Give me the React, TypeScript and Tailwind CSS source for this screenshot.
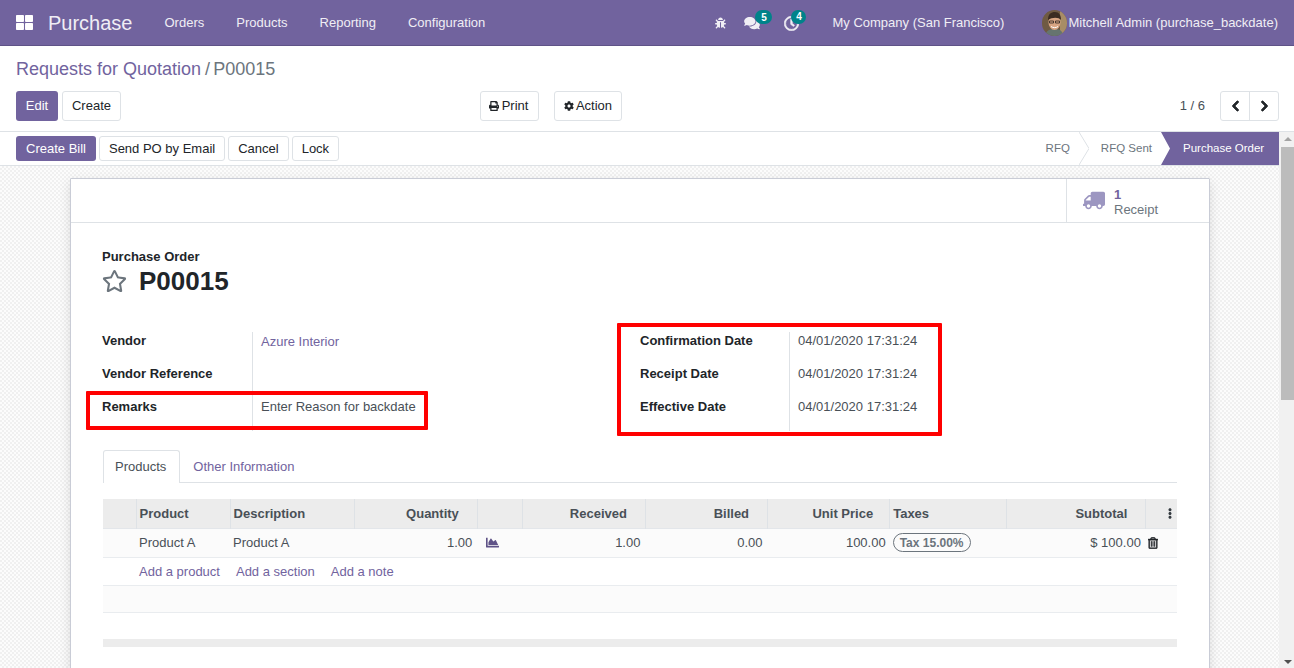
import {
  FaBug,
  FaChartArea,
  FaChevronLeft,
  FaChevronRight,
  FaCog,
  FaComments,
  FaEllipsisV,
  FaPrint,
  FaRegClock,
  FaRegStar,
  FaRegTrashAlt,
  FaThLarge,
  FaTruck,
} from "react-icons/fa";

const btnLight =
  "h-[25px] px-[9px] rounded-[3px] border border-[#dee2e6] bg-white text-[#212529] text-[13px] flex items-center";

const badgeBase =
  "absolute -top-[6px] h-[14px] rounded-full bg-[#00838a] text-white text-[10px] font-bold flex items-center justify-center";

const Avatar = () => (
  <svg width="25" height="26" viewBox="0 0 25 26" className="rounded-full shrink-0">
    <rect width="25" height="26" fill="#6f5a42" />
    <rect x="18" width="7" height="26" fill="#a88d66" />
    <path d="M3 26c1-6 5-7 9.500-7s8 1 9 7z" fill="#66746f" />
    <ellipse cx="12.500" cy="12.500" rx="6" ry="7.500" fill="#d8a583" />
    <path d="M6 10c0-6 3-8 7-8s6 3 6 8c-2-3-9-3-13 0z" fill="#3b2c22" />
    <path d="M7.500 11h4v2h-4zM13.500 11h4v2h-4z" fill="none" stroke="#2b2320" strokeWidth="0.800" />
    <path d="M9 16.500c2 1.500 5 1.500 7 0" stroke="#fff" strokeWidth="1" fill="none" />
  </svg>
);

const Navbar = () => (
  <header className="h-[46px] shrink-0 bg-[#71639e] border-b border-[#5f5387] flex items-center text-[#f0eef5] text-[13px]">
    <FaThLarge className="ml-[16px] w-[17px] h-[17px] text-white" />
    <span className="ml-[15px] text-[20px] mr-[32px]">Purchase</span>
    <nav className="flex gap-[32px]">
      <span>Orders</span>
      <span>Products</span>
      <span>Reporting</span>
      <span>Configuration</span>
    </nav>
    <div className="ml-auto flex items-center">
      <FaBug className="w-[11px] h-[12px] mr-[18px] mt-[1px]" />
      <span className="relative mr-[24px] mt-[1px]">
        <FaComments className="w-[16px] h-[14px]" />
        <span className={`${badgeBase} left-[11px] w-[17px]`}>5</span>
      </span>
      <span className="relative mr-[33px] mt-[1px]">
        <FaRegClock className="w-[15px] h-[15px]" stroke="currentColor" strokeWidth={20} />
        <span className={`${badgeBase} left-[7px] w-[15px]`}>4</span>
      </span>
      <span className="mr-[38px]">My Company (San Francisco)</span>
      <Avatar />
      <span className="ml-px mr-[16px]">Mitchell Admin (purchase_backdate)</span>
    </div>
  </header>
);

const ControlPanel = () => (
  <div className="h-[86px] shrink-0 bg-white border-b border-[#dee2e6] px-[16px]">
    <div className="h-[45px] pt-[11px] text-[18px] leading-[24px]">
      <span className="text-[#71639e]">Requests for Quotation</span>
      <span className="text-[#6c757d] ml-[4px] mr-[3px]">/</span>
      <span className="text-[#6c757d]">P00015</span>
    </div>
    <div className="flex items-center text-[13px] text-[#212529]">
      <button className="h-[30px] w-[42px] rounded-[3px] bg-[#71639e] text-white">Edit</button>
      <button className="h-[30px] w-[59px] ml-[4px] rounded-[3px] border border-[#dee2e6]">Create</button>
      <button className="h-[30px] w-[59px] ml-[359px] pr-[2px] rounded-[3px] border border-[#dee2e6] flex items-center justify-center gap-[3px]">
        <FaPrint className="w-[10px] h-[10px]" />
        Print
      </button>
      <button className="h-[30px] w-[68px] ml-[15px] rounded-[3px] border border-[#dee2e6] flex items-center justify-center gap-[2px]">
        <FaCog className="w-[10px] h-[10px]" />
        Action
      </button>
      <span className="ml-auto text-[#495057]">1 / 6</span>
      <div className="ml-[15px] mr-[-1px] flex h-[30px] w-[59px] rounded-[3px] border border-[#dee2e6]">
        <span className="flex-1 flex items-center justify-center border-r border-[#dee2e6]">
          <FaChevronLeft className="w-[11px] h-[12px]" stroke="currentColor" strokeWidth={40} />
        </span>
        <span className="flex-1 flex items-center justify-center">
          <FaChevronRight className="w-[11px] h-[12px]" stroke="currentColor" strokeWidth={40} />
        </span>
      </div>
    </div>
  </div>
);

const StatusBar = () => (
  <div className="h-[34px] shrink-0 bg-white border-b border-[#dee2e6] pl-[16px] flex items-center justify-between">
    <div className="flex items-center gap-[3px]">
      <button className="h-[25px] px-[10px] rounded-[3px] bg-[#71639e] text-white text-[13px]">Create Bill</button>
      <button className={btnLight}>Send PO by Email</button>
      <button className={btnLight}>Cancel</button>
      <button className={btnLight}>Lock</button>
    </div>
    <div className="flex items-center h-[33px] text-[11.500px] text-[#6c757d]">
      <span className="pr-[9px]">RFQ</span>
      <svg width="10" height="33" viewBox="0 0 10 33" className="shrink-0">
        <path d="M0 0l10 16.500L0 33" fill="none" stroke="#dee2e6" />
      </svg>
      <span className="pl-[12px] pr-[9px]">RFQ Sent</span>
      <span className="h-[33px] w-[118px] bg-[#71639e] text-white flex items-center pl-[22px] [clip-path:polygon(0_0,100%_0,100%_100%,0_100%,9px_50%)]">
        Purchase Order
      </span>
    </div>
  </div>
);

const Label = ({ children }: { children: string }) => (
  <div className="h-[33px] font-bold text-[13px] text-[#212529] leading-[18px]">{children}</div>
);

const Value = ({ children, link }: { children?: string; link?: boolean }) => (
  <div className={`h-[33px] pl-[8px] text-[13px] ${link ? "leading-[19px] text-[#71639e]" : "leading-[18px] text-[#495057]"}`}>
    {children}
  </div>
);

const Th = ({ children, w, right }: { children?: React.ReactNode; w: string; right?: boolean }) => (
  <th className={`${w} h-[29px] p-0 font-bold border-r border-[#dee2e6] last:border-r-0 ${right ? "text-right pr-[18px]" : "text-left pl-[3px]"}`}>
    {children}
  </th>
);

const ProductTable = () => (
  <table className="w-full table-fixed border-collapse text-[13px] text-[#495057]">
    <thead>
      <tr className="bg-[#ececec] border-b border-[#e3e6ea]">
        <Th w="w-[33px]" />
        <Th w="w-[94px]">Product</Th>
        <Th w="w-[124px]">Description</Th>
        <Th w="w-[123px]" right>Quantity</Th>
        <Th w="w-[45px]" />
        <Th w="w-[123px]" right>Received</Th>
        <Th w="w-[122px]" right>Billed</Th>
        <th className="w-[122px] h-[29px] p-0 pr-[16px] font-bold border-r border-[#dee2e6] text-right">Unit Price</th>
        <Th w="w-[117px]">Taxes</Th>
        <Th w="w-[139px]" right>Subtotal</Th>
        <Th w="w-[31px]">
          <FaEllipsisV className="w-[10px] h-[11px] ml-[16px] text-[#343a40]" />
        </Th>
      </tr>
    </thead>
    <tbody>
      <tr className="h-[29px] bg-[#fbfbfb] border-b border-[#e9ecef]">
        <td />
        <td className="px-[3px]">Product A</td>
        <td className="px-[3px]">Product A</td>
        <td className="text-right pr-[5px]">1.00</td>
        <td>
          <FaChartArea className="ml-[8px] w-[15px] h-[13px] text-[#5f5387]" />
        </td>
        <td className="text-right pr-[5px]">1.00</td>
        <td className="text-right pr-[5px]">0.00</td>
        <td className="text-right pr-[4px]">100.00</td>
        <td className="pl-[3px]">
          <span className="inline-flex items-center h-[19px] px-[6px] rounded-full border border-[#6c757d] text-[12px] font-bold text-[#6c757d]">
            Tax 15.00%
          </span>
        </td>
        <td className="text-right pr-[5px]">$ 100.00</td>
        <td>
          <FaRegTrashAlt className="w-[10px] h-[12px] text-[#212529] ml-[2px]" stroke="currentColor" strokeWidth={20} />
        </td>
      </tr>
      <tr className="h-[28px] border-b border-[#e9ecef]">
        <td />
        <td colSpan={10} className="px-[3px] pt-[1px] text-[#71639e]">
          <span className="mr-[16px]">Add a product</span>
          <span className="mr-[16px]">Add a section</span>
          <span>Add a note</span>
        </td>
      </tr>
      <tr className="h-[27px] bg-[#fbfbfb] border-b border-[#e9ecef]">
        <td colSpan={11} />
      </tr>
      <tr className="h-[27px]">
        <td colSpan={11} />
      </tr>
      <tr className="h-[8px] bg-[#ececec]">
        <td colSpan={11} />
      </tr>
    </tbody>
  </table>
);

const Sheet = () => (
  <div className="relative w-[1140px] ml-[70px] mt-[12px] bg-white border border-[#c9ccd6] rounded-t-[1px] shadow-[0_4px_12px_rgba(0,0,0,0.12)] h-[520px]">
    <div className="h-[44px] border-b border-[#dee2e6] flex justify-end">
      <div className="w-[143px] border-l border-[#dee2e6] flex items-center pl-[16px] gap-[9px]">
        <FaTruck className="w-[22px] h-[19px] text-[#9c96c1] -scale-x-100" />
        <div className="text-[13px] leading-[15px] text-[#6c757d] mt-[2px]">
          <div className="font-bold text-[#71639e]">1</div>
          <div>Receipt</div>
        </div>
      </div>
    </div>

    <div className="pl-[31px] pr-[32px] pt-[26px]">
      <div className="font-bold text-[13px] leading-[15px] text-[#212529]">Purchase Order</div>
      <div className="flex items-center h-[34px]">
        <FaRegStar className="w-[25px] h-[24px] text-[#6c757d]" />
        <span className="ml-[12px] text-[26px] font-bold text-[#212529]">P00015</span>
      </div>

      <div className="flex mt-[34px] h-[99px]">
        <div className="w-[150px]">
          <Label>Vendor</Label>
          <Label>Vendor Reference</Label>
          <Label>Remarks</Label>
        </div>
        <div className="w-[388px] border-l border-[#dee2e6]">
          <Value link>Azure Interior</Value>
          <Value />
          <Value>Enter Reason for backdate</Value>
        </div>
        <div className="w-[149px]">
          <Label>Confirmation Date</Label>
          <Label>Receipt Date</Label>
          <Label>Effective Date</Label>
        </div>
        <div className="border-l border-[#dee2e6] flex-1">
          <Value>04/01/2020 17:31:24</Value>
          <Value>04/01/2020 17:31:24</Value>
          <Value>04/01/2020 17:31:24</Value>
        </div>
      </div>

      <div className="ml-[1px] flex h-[33px] mt-[19px] border-b border-[#dee2e6] text-[13px]">
        <div className="h-[33px] pl-[11px] pr-[13px] flex items-center bg-white border border-b-0 border-[#dee2e6] rounded-t-[3px] text-[#495057]">
          Products
        </div>
        <div className="h-[32px] px-[13px] pt-[2px] flex items-center text-[#71639e]">Other Information</div>
      </div>

      <div className="ml-[1px] mt-[16px]">
        <ProductTable />
      </div>
    </div>

    {/* red annotation boxes from the screenshot */}
    <div className="absolute left-[15px] top-[212px] w-[342px] h-[39px] border-[4px] border-[#ff0000] rounded-[1px]" />
    <div className="absolute left-[546px] top-[144px] w-[325px] h-[113px] border-[4px] border-[#ff0000] rounded-[1px]" />
  </div>
);

const Scrollbar = () => (
  <div className="w-[15px] shrink-0 bg-[#f1f1f1] flex flex-col">
    <div className="h-[13px] pl-[2px] flex items-center justify-center">
      <span className="border-x-[4px] border-x-transparent border-b-[4px] border-b-[#a3a3a3]" />
    </div>
    <div className="h-[253px] mt-[2px] ml-[2px] bg-[#bcbcbc]" />
    <div className="flex-1" />
    <div className="h-[13px] pl-[2px] flex items-center justify-center">
      <span className="border-x-[4px] border-x-transparent border-t-[4px] border-t-[#505050]" />
    </div>
  </div>
);

export default function App() {
  return (
    <div className="h-[668px] w-[1294px] overflow-hidden flex flex-col bg-white font-['Liberation_Sans',Arial,sans-serif]">
      <Navbar />
      <ControlPanel />
      <div className="flex flex-1 min-h-0">
        <div className="flex-1 min-w-0 flex flex-col">
          <StatusBar />
          <div className="flex-1 min-h-0 overflow-hidden bg-[repeating-conic-gradient(#f0f0f0_0_25%,#fcfcfc_0_50%)] bg-[length:4px_4px]">
            <Sheet />
          </div>
        </div>
        <Scrollbar />
      </div>
    </div>
  );
}
